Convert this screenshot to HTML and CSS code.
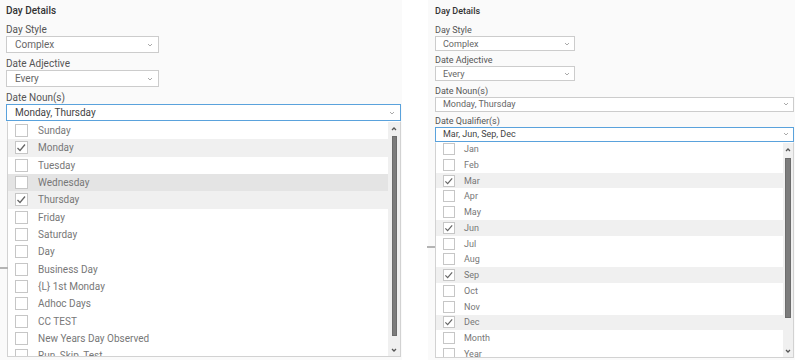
FILE: index.html
```html
<!DOCTYPE html>
<html lang="en">
<head>
  <meta charset="UTF-8">
  <meta name="viewport" content="width=device-width, initial-scale=1.0">
  <title>Day Details</title>
  <link rel="stylesheet" href="styles.css">
</head>
<body>

<main class="page">

  <!-- noun dropdown open -->
  <section class="panel panel-left">
    <span class="rule-mark"></span>
    <h2 class="panel-title">Day Details</h2>

    <div class="field">
      <label class="field-label">Day Style</label>
      <div class="select select-short"><span>Complex</span><svg class="caret" viewBox="0 0 6 4"><polyline points="1,1 3,3 5,1"/></svg></div>
    </div>

    <div class="field">
      <label class="field-label">Date Adjective</label>
      <div class="select select-short"><span>Every</span><svg class="caret" viewBox="0 0 6 4"><polyline points="1,1 3,3 5,1"/></svg></div>
    </div>

    <div class="field">
      <label class="field-label">Date Noun(s)</label>
      <div class="select is-open"><span>Monday, Thursday</span><svg class="caret" viewBox="0 0 6 4"><polyline points="1,1 3,3 5,1"/></svg></div>
      <div class="dropdown">
        <ul class="options">
          <li class="option"><span class="check"></span>Sunday</li>
          <li class="option is-checked"><span class="check"><svg viewBox="0 0 11 11"><polyline points="1.5,6 4,8.5 9,2.5"/></svg></span>Monday</li>
          <li class="option"><span class="check"></span>Tuesday</li>
          <li class="option is-hover"><span class="check"></span>Wednesday</li>
          <li class="option is-checked"><span class="check"><svg viewBox="0 0 11 11"><polyline points="1.5,6 4,8.5 9,2.5"/></svg></span>Thursday</li>
          <li class="option"><span class="check"></span>Friday</li>
          <li class="option"><span class="check"></span>Saturday</li>
          <li class="option"><span class="check"></span>Day</li>
          <li class="option"><span class="check"></span>Business Day</li>
          <li class="option"><span class="check"></span>{L} 1st Monday</li>
          <li class="option"><span class="check"></span>Adhoc Days</li>
          <li class="option"><span class="check"></span>CC TEST</li>
          <li class="option"><span class="check"></span>New Years Day Observed</li>
          <li class="option"><span class="check"></span>Run_Skip_Test</li>
        </ul>
        <div class="scrollbar">
          <svg class="arrow" viewBox="0 0 6 4"><polyline points="1,3 3,1 5,3"/></svg>
          <div class="thumb"></div>
          <svg class="arrow arrow-down" viewBox="0 0 6 4"><polyline points="1,1 3,3 5,1"/></svg>
        </div>
      </div>
    </div>
  </section>

  <!-- qualifier dropdown open -->
  <section class="panel panel-right">
    <span class="rule-mark"></span>
    <h2 class="panel-title">Day Details</h2>

    <div class="field">
      <label class="field-label">Day Style</label>
      <div class="select select-short"><span>Complex</span><svg class="caret" viewBox="0 0 6 4"><polyline points="1,1 3,3 5,1"/></svg></div>
    </div>

    <div class="field">
      <label class="field-label">Date Adjective</label>
      <div class="select select-short"><span>Every</span><svg class="caret" viewBox="0 0 6 4"><polyline points="1,1 3,3 5,1"/></svg></div>
    </div>

    <div class="field">
      <label class="field-label">Date Noun(s)</label>
      <div class="select"><span>Monday, Thursday</span><svg class="caret" viewBox="0 0 6 4"><polyline points="1,1 3,3 5,1"/></svg></div>
    </div>

    <div class="field">
      <label class="field-label">Date Qualifier(s)</label>
      <div class="select is-open"><span>Mar, Jun, Sep, Dec</span><svg class="caret" viewBox="0 0 6 4"><polyline points="1,1 3,3 5,1"/></svg></div>
      <div class="dropdown">
        <ul class="options">
          <li class="option"><span class="check"></span>Jan</li>
          <li class="option"><span class="check"></span>Feb</li>
          <li class="option is-checked"><span class="check"><svg viewBox="0 0 11 11"><polyline points="1.5,6 4,8.5 9,2.5"/></svg></span>Mar</li>
          <li class="option"><span class="check"></span>Apr</li>
          <li class="option"><span class="check"></span>May</li>
          <li class="option is-checked"><span class="check"><svg viewBox="0 0 11 11"><polyline points="1.5,6 4,8.5 9,2.5"/></svg></span>Jun</li>
          <li class="option"><span class="check"></span>Jul</li>
          <li class="option"><span class="check"></span>Aug</li>
          <li class="option is-checked"><span class="check"><svg viewBox="0 0 11 11"><polyline points="1.5,6 4,8.5 9,2.5"/></svg></span>Sep</li>
          <li class="option"><span class="check"></span>Oct</li>
          <li class="option"><span class="check"></span>Nov</li>
          <li class="option is-checked"><span class="check"><svg viewBox="0 0 11 11"><polyline points="1.5,6 4,8.5 9,2.5"/></svg></span>Dec</li>
          <li class="option"><span class="check"></span>Month</li>
          <li class="option"><span class="check"></span>Year</li>
        </ul>
        <div class="scrollbar">
          <svg class="arrow" viewBox="0 0 6 4"><polyline points="1,3 3,1 5,3"/></svg>
          <div class="thumb"></div>
          <svg class="arrow arrow-down" viewBox="0 0 6 4"><polyline points="1,1 3,3 5,1"/></svg>
        </div>
      </div>
    </div>
  </section>

</main>

</body>
</html>
```

FILE: styles.css
```css
body {
  margin: 0;
  font-family: Roboto, 'Liberation Sans', sans-serif;
  background-color: #fff;
  color: #555;
}

.page {
  display: flex;
  gap: 26px;
  height: 360px;
  overflow: hidden;
}

.panel {
  position: relative;
  box-sizing: border-box;
  background-color: #fafafa;
}

.panel-left {
  width: 402px;
  padding: 4px 1px 0 6px;
  font-size: 10px;
}

.panel-right {
  flex: 1;
  padding: 5px 1px 0 7px;
  font-size: 9px;
}

.rule-mark {
  position: absolute;
  left: 0;
  top: 267px;
  width: 8px;
  height: 2px;
  background-color: #b4b4b4;
}

.panel-right .rule-mark {
  left: -1px;
  top: 246px;
}

.panel-title {
  margin: 0 0 6px;
  font-size: 10px;
  font-weight: 500;
  line-height: 13px;
  color: #333;
}

.panel-right .panel-title {
  font-size: 9px;
  line-height: 12px;
  margin-bottom: 7px;
}

.field-label {
  display: block;
  line-height: 13px;
  color: #555;
}

.panel-right .field-label {
  line-height: 12px;
}

.select {
  height: 17px;
  box-sizing: border-box;
  margin-bottom: 4px;
  padding: 0 5px 0 8px;
  display: flex;
  align-items: center;
  justify-content: space-between;
  border: 1px solid #ccc;
  background-color: #fff;
  color: #666;
}

.panel-right .select {
  height: 15px;
  margin-bottom: 3.3px;
  padding: 0 4px 0 7px;
}

.select-short {
  width: 153px;
}

.panel-right .select-short {
  width: 140px;
}

.select.is-open {
  margin-bottom: 0;
  border-color: #5aa2dc;
  color: #444;
}

.caret {
  width: 6px;
  height: 4px;
  fill: none;
  stroke: #aaa;
  stroke-width: 1;
}

.dropdown {
  display: flex;
  height: 236px;
  margin-left: 1px;
  box-sizing: border-box;
  border: 1px solid #d2d2d2;
  border-top-color: #fff;
  background-color: #fff;
  overflow: hidden;
}

.panel-right .dropdown {
  height: 216px;
  margin-left: 0;
}

.options {
  flex: 1;
  margin: 0;
  padding: 0;
  list-style: none;
}

.panel-right .options {
  margin-top: -1.8px;
}

.option {
  display: flex;
  align-items: center;
  height: 17.33px;
  padding-left: 7px;
  color: #777;
}

.panel-right .option {
  height: 15.77px;
}

.option.is-checked {
  background-color: #f0f0f0;
}

.option.is-hover {
  background-color: #e4e4e4;
}

.check {
  width: 13px;
  height: 13px;
  box-sizing: border-box;
  margin-right: 10px;
  border: 1px solid #c6c6c6;
  background-color: #fff;
  flex-shrink: 0;
}

.panel-right .check {
  width: 12px;
  height: 12px;
  margin-right: 9px;
}

.check svg {
  display: block;
  width: 100%;
  height: 100%;
  fill: none;
  stroke: #666;
  stroke-width: 1.3;
}

.scrollbar {
  width: 12px;
  display: flex;
  flex-direction: column;
  align-items: center;
  background-color: #f0f0f0;
}

.panel-right .scrollbar {
  width: 10px;
}

.arrow {
  width: 6px;
  height: 4px;
  margin: 5px 0 4px;
  fill: none;
  stroke: #555;
  stroke-width: 1.3;
}

.arrow-down {
  margin: auto 0 4px;
}

.thumb {
  width: 5px;
  height: 200px;
  margin-top: 1px;
  box-sizing: border-box;
  border: 1px solid #6c6c6c;
  background-color: #7c7c7c;
}

.panel-right .thumb {
  width: 6px;
  height: 160px;
  margin-top: 2px;
}
```
